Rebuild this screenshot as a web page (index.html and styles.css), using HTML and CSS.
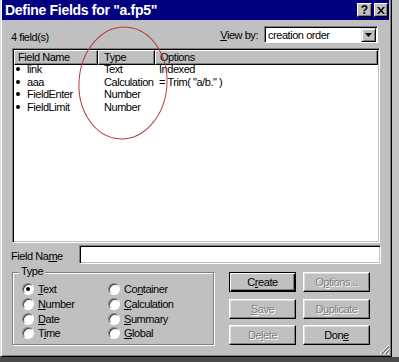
FILE: index.html
```html
<!DOCTYPE html>
<html lang="en">
<head>
  <meta charset="UTF-8" />
  <title>Define Fields</title>
  <link rel="stylesheet" href="styles.css">
</head>
<body>
  <div class="window">
    <div class="titlebar">
      <span class="title">Define Fields for "a.fp5"</span>
      <div class="title-btns">
        <span class="tbtn help">?</span>
        <span class="tbtn close">
          <svg width="8" height="7" viewBox="0 0 8 7"><path d="M0 0h2l2 2.5 2-2.5h2L5 3.5 8 7H6L4 4.5 2 7H0l3-3.5z" fill="#000"/></svg>
        </span>
      </div>
    </div>

    <div class="content">
      <div class="toprow">
        <span class="count">4 field(s)</span>
        <div class="viewby">
          <label><u>V</u>iew by:</label>
          <div class="combo">
            <span class="combo-text">creation order</span>
            <span class="combo-btn">
              <svg width="7" height="4" viewBox="0 0 7 4"><path d="M0 0h7L3.5 4z" fill="#000"/></svg>
            </span>
          </div>
        </div>
      </div>

      <div class="listbox">
        <div class="list-head">
          <div class="hcell c-name">Field Name</div>
          <div class="hcell c-type">Type</div>
          <div class="hcell c-opt">Options</div>
        </div>
        <div class="row"><span class="c-name"><i class="dot"></i>link</span><span class="c-type">Text</span><span class="c-opt">Indexed</span></div>
        <div class="row"><span class="c-name"><i class="dot"></i>aaa</span><span class="c-type">Calculation</span><span class="c-opt">= Trim( "a/b." )</span></div>
        <div class="row"><span class="c-name"><i class="dot"></i>FieldEnter</span><span class="c-type">Number</span><span class="c-opt"></span></div>
        <div class="row"><span class="c-name"><i class="dot"></i>FieldLimit</span><span class="c-type">Number</span><span class="c-opt"></span></div>
      </div>

      <div class="namerow">
        <label>Field Na<u>m</u>e</label>
        <div class="textfield"></div>
      </div>

      <div class="bottom">
        <div class="group">
          <span class="group-label">Type</span>
          <div class="radios">
            <div class="radio"><i class="rb on"></i><span><u>T</u>ext</span></div>
            <div class="radio"><i class="rb"></i><span>Co<u>n</u>tainer</span></div>
            <div class="radio"><i class="rb"></i><span><u>N</u>umber</span></div>
            <div class="radio"><i class="rb"></i><span><u>C</u>alculation</span></div>
            <div class="radio"><i class="rb"></i><span><u>D</u>ate</span></div>
            <div class="radio"><i class="rb"></i><span><u>S</u>ummary</span></div>
            <div class="radio"><i class="rb"></i><span>T<u>i</u>me</span></div>
            <div class="radio"><i class="rb"></i><span><u>G</u>lobal</span></div>
          </div>
        </div>

        <div class="buttons">
          <button class="btn default">C<u>r</u>eate</button>
          <button class="btn disabled">O<u>p</u>tions...</button>
          <button class="btn disabled"><u>S</u>ave</button>
          <button class="btn disabled">D<u>u</u>plicate</button>
          <button class="btn disabled">De<u>l</u>ete</button>
          <button class="btn">Don<u>e</u></button>
        </div>
      </div>
    </div>

    <svg class="grip" width="11" height="11" viewBox="0 0 11 11">
      <path d="M10 1L1 10M10 5L5 10M10 9L9 10" stroke="#fff" stroke-width="1"/>
      <path d="M10 2L2 10M10 3L3 10M10 6L6 10M10 7L7 10" stroke="#808080" stroke-width="1"/>
    </svg>

    <!-- hand-drawn red circle round the Type column -->
    <svg class="annotation" width="392" height="357">
      <ellipse cx="122" cy="83" rx="44" ry="56" fill="none" stroke="#b83a3a" stroke-width="1" transform="rotate(4 122 83)"/>
    </svg>
  </div>
</body>
</html>
```

FILE: styles.css
```css
* {
  box-sizing: border-box;
  margin: 0;
  padding: 0;
}

body {
  width: 399px;
  height: 362px;
  background: linear-gradient(#c4c4c4 357px, #4a4a4a 357px);
  font-family: 'Liberation Sans', Arial, sans-serif;
  font-size: 11px;
  letter-spacing: -0.45px;
  color: #000;
  overflow: hidden;
}

.window {
  position: relative;
  width: 392px;
  height: 357px;
  background: #c0c0c0;
  border-left: 1px solid #dfdfdf;
  border-right: 1px solid #000;
  border-bottom: 1px solid #000;
  box-shadow: inset 1px 0 #fff, inset -1px -1px #808080;
  padding: 0 2px 2px 1px;
  display: flex;
  flex-direction: column;
}

.titlebar {
  height: 20px;
  background: #000080;
  display: flex;
  align-items: center;
  justify-content: space-between;
  padding: 0 0 0 3px;
}

.title {
  color: #fff;
  font-weight: bold;
  font-size: 14px;
  letter-spacing: -0.3px;
}

.title-btns {
  display: flex;
  gap: 2px;
  padding-right: 1px;
}

.tbtn {
  width: 15px;
  height: 14px;
  background: #c0c0c0;
  border: 1px solid;
  border-color: #fff #000 #000 #fff;
  box-shadow: inset -1px -1px #808080;
  display: flex;
  align-items: center;
  justify-content: center;
  font-weight: bold;
  font-size: 12px;
  letter-spacing: 0;
  line-height: 1;
}

.tbtn.close { width: 14px; }

.content {
  flex: 1;
  padding: 6px 9px 0 9px;
  display: flex;
  flex-direction: column;
}

.toprow {
  height: 17px;
  display: flex;
  align-items: center;
  justify-content: space-between;
}

.count {
  padding-top: 4px;
}

.viewby {
  display: flex;
  align-items: center;
  gap: 6px;
  margin-right: 2px;
}

.combo {
  width: 114px;
  height: 17px;
  background: #fff;
  border: 1px solid;
  border-color: #808080 #fff #fff #808080;
  box-shadow: inset 1px 1px #000;
  display: flex;
  align-items: center;
  justify-content: space-between;
  padding: 1px 1px 0 3px;
}

.combo-btn {
  width: 15px;
  height: 14px;
  margin-top: -1px;
  background: #c0c0c0;
  border: 1px solid;
  border-color: #dfdfdf #000 #000 #dfdfdf;
  box-shadow: inset 1px 1px #fff, inset -1px -1px #808080;
  display: flex;
  align-items: center;
  justify-content: center;
}

.listbox {
  margin: 5px 0 0 1px;
  height: 195px;
  background: #fff;
  border: 1px solid;
  border-color: #808080 #fff #fff #808080;
  box-shadow: inset 1px 1px #000, inset -1px -1px #c0c0c0;
  padding: 1px;
}

.list-head {
  display: flex;
  height: 15px;
}

.hcell {
  background: #c0c0c0;
  border: 1px solid;
  border-color: #fff #000 #000 #fff;
  box-shadow: inset -1px -1px #808080;
  padding: 0 0 0 3px;
  line-height: 12px;
}

.c-name { width: 84px; }
.c-type { width: 57px; }
.c-opt { flex: 1; }

.list-head .c-name { padding-left: 3px; }
.list-head .c-type { padding-left: 5px; }
.list-head .c-opt { padding-left: 4px; }

.row {
  display: flex;
  height: 12.7px;
  line-height: 8px;
}

.row .c-name {
  display: flex;
  align-items: center;
  padding-left: 2px;
  height: 8px;
}

.row .c-type { padding-left: 6px; }
.row .c-opt { padding-left: 4px; }

.dot {
  width: 4px;
  height: 4px;
  background: #000;
  border-radius: 50%;
  margin: 0 7px 0 0;
}

.namerow {
  margin-top: 2px;
  height: 19px;
  display: flex;
  align-items: center;
}

.namerow label {
  width: 68px;
  padding-top: 3px;
}

.textfield {
  flex: 1;
  height: 19px;
  margin-right: -1px;
  background: #fff;
  border: 1px solid;
  border-color: #808080 #fff #fff #808080;
  box-shadow: inset 1px 1px #000, inset -1px -1px #c0c0c0;
}

.bottom {
  margin-top: 8px;
  display: flex;
  height: 73px;
}

.group {
  position: relative;
  width: 202px;
  margin-left: 1px;
  border: 1px solid #808080;
  box-shadow: inset 1px 1px #fff, 1px 1px #fff;
  padding: 9px 0 0 9px;
}

.group-label {
  position: absolute;
  top: -8px;
  left: 6px;
  padding: 0 2px;
  background: #c0c0c0;
  line-height: 13px;
}

.radios {
  display: grid;
  grid-template-columns: 86px 1fr;
  grid-auto-rows: 14.7px;
}

.radio {
  display: flex;
  align-items: center;
  gap: 4px;
}

.rb {
  position: relative;
  width: 12px;
  height: 12px;
  border-radius: 50%;
  background: #fff;
  border: 1px solid;
  border-color: #808080 #fff #fff #808080;
  box-shadow: inset 1px 1px #404040;
}

.rb.on::after {
  content: "";
  position: absolute;
  left: 3px;
  top: 3px;
  width: 4px;
  height: 4px;
  border-radius: 50%;
  background: #000;
}

.buttons {
  margin-left: 15px;
  display: grid;
  grid-template-columns: 67px 67px;
  grid-template-rows: 20px 20px 20px;
  column-gap: 7px;
  row-gap: 6.5px;
}

.btn {
  font: inherit;
  letter-spacing: inherit;
  color: #000;
  background: #c0c0c0;
  border: 1px solid;
  border-color: #fff #000 #000 #fff;
  box-shadow: inset -1px -1px #808080, inset 1px 1px #dfdfdf;
}

.btn.default {
  border: 1px solid #000;
  box-shadow: inset 1px 1px #fff, inset -1px -1px #000, inset -2px -2px #808080;
}

.btn.disabled {
  color: #808080;
  text-shadow: 1px 1px #fff;
}

.grip {
  position: absolute;
  right: 1px;
  bottom: 1px;
}

.annotation {
  position: absolute;
  left: 0;
  top: 0;
  pointer-events: none;
}
```
